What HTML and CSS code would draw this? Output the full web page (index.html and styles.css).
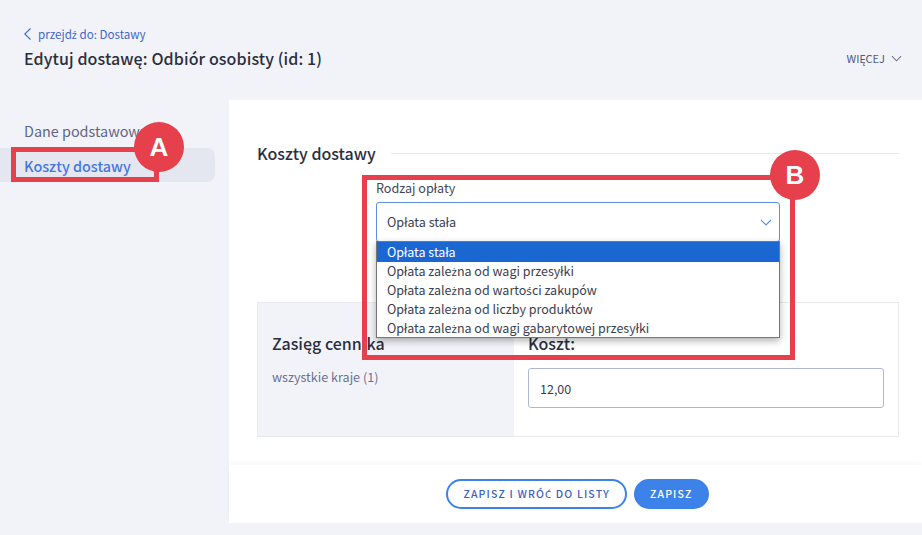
FILE: index.html
```html
<!DOCTYPE html>
<html lang="pl">
<head>
    <meta charset="UTF-8">
    <title>Edytuj dostawę</title>
    <link rel="stylesheet" href="styles.css">
</head>
<body>
    <header class="page-head">
        <div>
            <a class="back-link" href="#">
                <svg class="back-icon" viewBox="0 0 7 12"><path d="M6.5.5.8 6l5.7 5.5"/></svg>
                <span>przejd<span class="pl">ź</span> do: Dostawy</span>
            </a>
            <h1 class="page-title">Edytuj dostawę: Odbiór osobisty (id: 1)</h1>
        </div>
        <a class="more" href="#">WIĘCEJ
            <svg class="more-icon" viewBox="0 0 12 7"><path d="M1 1l5 5 5-5"/></svg>
        </a>
    </header>

    <div class="layout">
        <nav class="side-nav">
            <a class="side-item" href="#">Dane podstawowe</a>
            <a class="side-item active" href="#">Koszty dostawy</a>
        </nav>

        <main class="panel">
            <div class="panel-body">
                <div class="section-head">
                    <h2 class="section-title">Koszty dostawy</h2>
                    <div class="section-line"></div>
                </div>

                <div class="fee-form">
                    <label class="fee-label">Rodzaj opłaty</label>
                    <div class="select-box">
                        <span>Opłata stała</span>
                        <svg class="select-icon" viewBox="0 0 12 7"><path d="M1 1l5 5 5-5"/></svg>
                        <ul class="select-list">
                            <li class="selected">Opłata stała</li>
                            <li>Opłata zale<span class="pl">ż</span>na od wagi przesyłki</li>
                            <li>Opłata zale<span class="pl">ż</span>na od warto<span class="pl">ś</span>ci zakupów</li>
                            <li>Opłata zale<span class="pl">ż</span>na od liczby produktów</li>
                            <li>Opłata zale<span class="pl">ż</span>na od wagi gabarytowej przesyłki</li>
                        </ul>
                    </div>
                </div>

                <div class="price-table">
                    <div class="price-range">
                        <h3 class="price-head">Zasięg cennika</h3>
                        <p class="price-note">wszystkie kraje (1)</p>
                    </div>
                    <div class="price-cost">
                        <h3 class="price-head">Koszt:</h3>
                        <div class="cost-input">12,00</div>
                    </div>
                </div>
            </div>

            <footer class="panel-foot">
                <a class="btn btn-outline" href="#">ZAPISZ I WRÓ<span class="pl">Ć</span> DO LISTY</a>
                <a class="btn btn-solid" href="#">ZAPISZ</a>
            </footer>
        </main>
    </div>

    <!-- adnotacje na zrzucie -->
    <div class="mark mark-a"></div>
    <div class="badge badge-a">A</div>
    <div class="mark mark-b"></div>
    <div class="badge badge-b">B</div>
</body>
</html>
```

FILE: styles.css
```css
html, body { margin: 0; padding: 0; }
body {
    position: relative;
    width: 922px; height: 535px; overflow: hidden;
    background: #f2f3f8; color: #2b2e3f;
    font-family: "Noto Sans CJK SC", "Noto Sans", sans-serif;
}
a { text-decoration: none; color: inherit; }
h1, h2, h3, p, ul { margin: 0; padding: 0; }
.pl { font-family: "Noto Sans", sans-serif; font-size: 0.92em; }

.page-head {
    display: flex; justify-content: space-between; align-items: flex-start;
    height: 100px; box-sizing: border-box; padding: 26px 21px 0 24px;
}
.back-link { display: flex; align-items: center; gap: 7px; height: 16px; font-size: 11.6px; line-height: 16px; color: #3f66c9; }
.back-icon { width: 7px; height: 12px; fill: none; stroke: #3f6fd8; stroke-width: 1.2; }
.page-title { margin-top: 4px; font-size: 16px; line-height: 24px; font-weight: 500; letter-spacing: 0.1px; color: #2b2e3f; }
.more { display: flex; align-items: center; gap: 6px; margin-top: 24px; margin-right: -1px; font-size: 11px; line-height: 16px; color: #50597f; }
.more-icon { width: 11px; height: 7px; fill: none; stroke: #6b7188; stroke-width: 1.1; }

.layout { display: flex; align-items: flex-start; }
.side-nav { width: 215px; margin-right: 14px; padding: 14px 0 0 0; display: flex; flex-direction: column; }
.side-item { display: block; height: 34px; padding-left: 24px; font-size: 14.4px; line-height: 33px; color: #5e6586; white-space: nowrap; overflow: hidden; }
.side-item.active { line-height: 36px; background: #e5e7f0; border-radius: 0 8px 8px 0; color: #4776e0; font-weight: 500; }

.panel { flex: 1; height: 423px; background: #fff; display: flex; flex-direction: column; }
.panel-body { height: 365px; box-sizing: border-box; padding: 42px 23px 0 28px; box-shadow: 0 3px 5px -3px rgba(40, 40, 60, 0.08); }
.section-head { display: flex; align-items: center; gap: 15px; height: 22px; }
.section-title { font-size: 16px; line-height: 22px; font-weight: 500; color: #2b2e3f; white-space: nowrap; }
.section-line { flex: 1; height: 1px; margin-top: 0; background: #e8e9ee; }

.fee-form { width: 404px; margin: 15px auto 0; height: 123px; }
.fee-label { display: block; height: 19px; margin-bottom: 4px; font-size: 12.6px; line-height: 18px; color: #44475a; }
.select-box {
    position: relative; display: flex; justify-content: space-between; align-items: center;
    height: 40px; box-sizing: border-box; padding: 0 7px 2px 10px;
    border: 1px solid #5c8ee8; border-radius: 3px; font-size: 12.6px; color: #3b3e50;
}
.select-icon { width: 12px; height: 7px; margin-top: 2px; fill: none; stroke: #5c8ee8; stroke-width: 1.1; }
.select-list {
    position: absolute; left: -1px; top: 38px; width: 404px; z-index: 5;
    box-sizing: border-box; list-style: none; background: #fff;
    border: 1px solid #767676; box-shadow: 0 3px 7px rgba(0, 0, 0, 0.3);
}
.select-list li { height: 19px; padding-left: 10px; font-size: 12.5px; line-height: 18px; color: #3b3e50; }
.select-list li:first-child { height: 20px; line-height: 20px; }
.select-list li:last-child { height: 18px; }
.select-list li.selected { background: #1a67d2; color: #fff; }

.price-table { display: flex; height: 135px; box-sizing: border-box; border: 1px solid #e9eaef; }
.price-range { width: 256px; box-sizing: border-box; padding: 28px 0 0 14px; background: #f2f3f8; }
.price-cost { flex: 1; padding: 28px 14px 0 14px; }
.price-head { font-size: 16px; line-height: 24px; font-weight: 500; color: #2b2e3f; }
.price-note { margin-top: 13px; font-size: 12.6px; line-height: 18px; color: #6c7192; }
.cost-input { height: 40px; margin-top: 13px; box-sizing: border-box; padding-left: 11px; border: 1px solid #adb7d1; border-radius: 3px; font-size: 12.5px; line-height: 40px; color: #3b3e50; }

.panel-foot { display: flex; justify-content: center; align-items: center; gap: 7px; height: 58px; padding-left: 4px; background: #fff; box-shadow: 0 -3px 5px rgba(40, 40, 60, 0.03); }
.btn { display: block; box-sizing: border-box; height: 30px; border-radius: 15px; font-size: 10.5px; line-height: 26px; font-weight: 500; letter-spacing: 1.15px; white-space: nowrap; }
.btn-outline { padding: 0 15px; border: 2px solid #3d82e8; color: #3d5fc2; }
.btn-solid { padding: 0 14px; border: 2px solid #3d82e8; background: #3d82e8; color: #fff; }

.mark { position: absolute; z-index: 10; box-sizing: border-box; border: 5px solid #e5404b; }
.mark-a { left: 11px; top: 147px; width: 148px; height: 35px; }
.mark-b { left: 362px; top: 175px; width: 433px; height: 185px; }
.badge {
    position: absolute; z-index: 11; width: 50px; height: 50px; border-radius: 50%;
    background: #e5404b; color: #fff; text-align: center;
    font-family: "Liberation Sans", sans-serif; font-size: 26px; line-height: 50px; font-weight: 700;
}
.badge-a { left: 134px; top: 122px; }
.badge-b { left: 770px; top: 150px; }
```
